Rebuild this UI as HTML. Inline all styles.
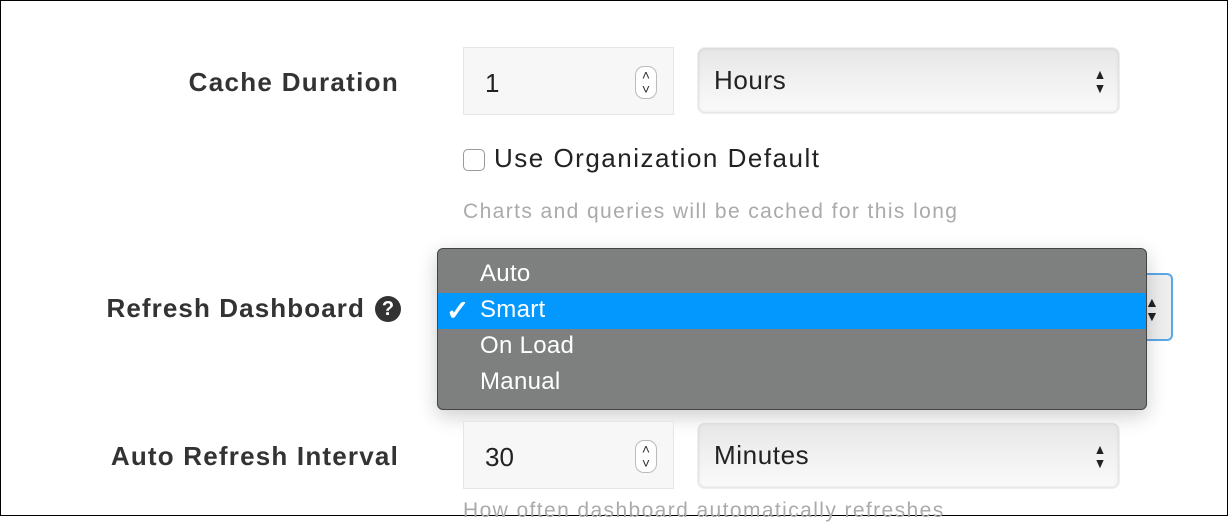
<!DOCTYPE html>
<html><head><style>
*{box-sizing:border-box;margin:0;padding:0}
body{width:1228px;height:516px;overflow:hidden;background:#fff;font-family:"Liberation Sans",sans-serif;position:relative;border:1px solid #000}
.a{position:absolute}
.lbl{position:absolute;right:828px;font-size:26px;font-weight:bold;color:#333;white-space:nowrap;letter-spacing:1.3px}
.num{position:absolute;left:462px;width:211px;height:68px;border:1px solid #e6e6e6;background:#f7f7f7;font-size:26px;color:#222;padding:20px 0 0 21px}
.spin{position:absolute;right:16px;top:18px;width:22px;height:33px;border:1px solid #bbb;border-radius:9px;background:#fff;font-size:14px;line-height:14px;text-align:center;color:#333;padding-top:1px}
.sel{position:absolute;left:696px;width:423px;height:67px;border-radius:8px;background:linear-gradient(#e6e6e6,#f1f1f1 50%,#fafafa);box-shadow:inset 0 0 3px #ccc;border:1px solid #eee;font-size:26px;color:#222;padding:17px 0 0 16px;letter-spacing:0.6px}
.arr{position:absolute;right:12px;top:19px;font-size:14px;line-height:14px;color:#222;transform:scaleX(0.9)}
</style></head><body>
<div class="lbl" style="top:66px">Cache Duration</div>
<div class="num" style="top:46px">1<div class="spin">&#708;<br>&#709;</div></div>
<div class="sel" style="top:46px">Hours<div class="arr">&#9650;<br>&#9660;</div></div>
<div class="a" style="left:462px;top:148px;width:22px;height:22px;border:1px solid #999;border-radius:5px;background:#fff"></div>
<div class="a" style="left:493px;top:142px;font-size:26px;color:#222;letter-spacing:1.5px">Use Organization Default</div>
<div class="a" style="left:462px;top:199px;font-size:21px;color:#aaa;letter-spacing:1.4px">Charts and queries will be cached for this long</div>

<div class="lbl" style="top:292px;right:862px;letter-spacing:1.1px">Refresh Dashboard</div>
<div class="a" style="left:374px;top:295px;width:26px;height:26px;border-radius:50%;background:#333;color:#fff;font-size:20px;font-weight:bold;text-align:center;line-height:26px">?</div>
<div class="a" style="left:696px;top:272px;width:476px;height:68px;border:2px solid #5aa7e6;border-radius:6px;background:#eee"></div>
<div class="a" style="left:1144px;top:294px;font-size:14px;line-height:14px;color:#222">&#9650;<br>&#9660;</div>

<div class="a" style="left:436px;top:247px;width:710px;height:162px;background:#7e8080;border:1px solid #444;border-radius:6px;box-shadow:0 6px 20px rgba(0,0,0,.2);overflow:hidden;color:#fff;font-size:24px;letter-spacing:0.3px">
 <div class="a" style="left:42px;top:11px">Auto</div>
 <div class="a" style="left:0;top:44px;width:100%;height:36px;background:#0398fe"></div>
 <div class="a" style="left:8px;top:45px;font-size:28px;font-weight:bold">&#10003;</div>
 <div class="a" style="left:42px;top:47px">Smart</div>
 <div class="a" style="left:42px;top:83px">On Load</div>
 <div class="a" style="left:42px;top:119px">Manual</div>
</div>

<div class="lbl" style="top:440px;letter-spacing:1.2px">Auto Refresh Interval</div>
<div class="num" style="top:420px">30<div class="spin">&#708;<br>&#709;</div></div>
<div class="sel" style="top:421px">Minutes<div class="arr">&#9650;<br>&#9660;</div></div>
<div class="a" style="left:462px;top:498px;font-size:21px;color:#aaa;letter-spacing:1.4px">How often dashboard automatically refreshes</div>
</body></html>
